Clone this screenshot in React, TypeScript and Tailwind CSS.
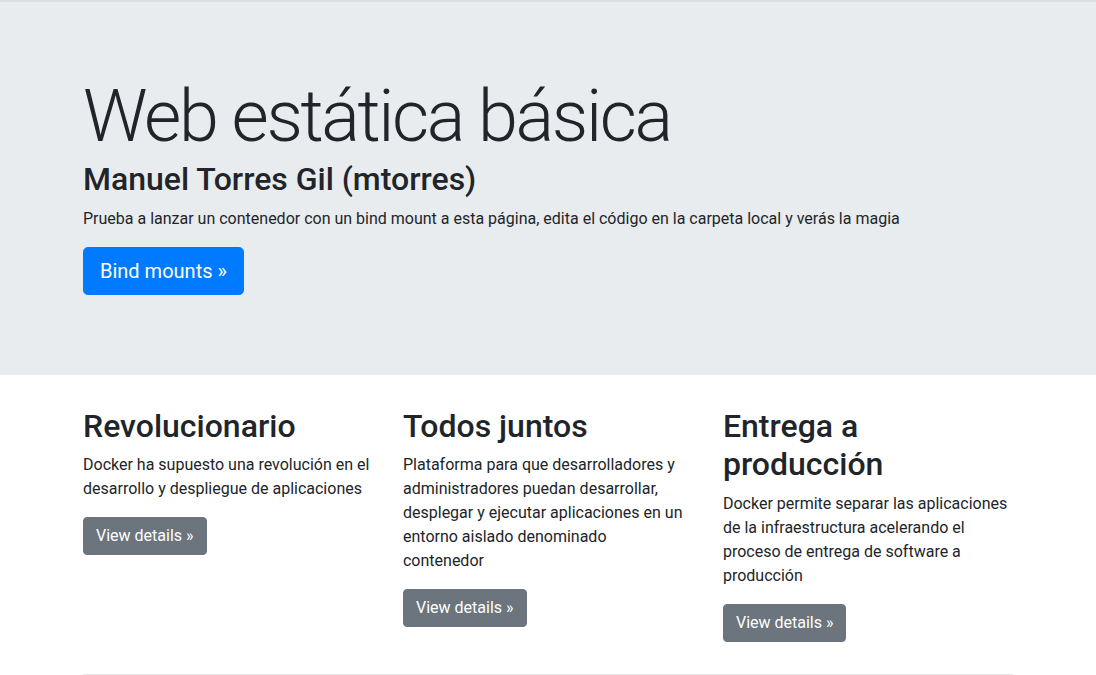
export default function App() {
  const cols = [
    {
      title: 'Revolucionario',
      text: 'Docker ha supuesto una revolución en el desarrollo y despliegue de aplicaciones',
      width: '',
    },
    {
      title: 'Todos juntos',
      text: 'Plataforma para que desarrolladores y administradores puedan desarrollar, desplegar y ejecutar aplicaciones en un entorno aislado denominado contenedor',
      width: 'max-w-[286px]',
    },
    {
      title: 'Entrega a producción',
      text: 'Docker permite separar las aplicaciones de la infraestructura acelerando el proceso de entrega de software a producción',
      width: '',
    },
  ];

  return (
    <div className="min-h-[675px] bg-white font-['Roboto',sans-serif] text-[#212529]">
      <main>
        <div className="mb-8 border-t-2 border-[#dcdfe2] bg-[#e9ecef] px-8 py-16">
          <div className="mx-auto w-[960px] px-[15px]">
            <h1 className="pt-2 text-[72px] font-light leading-[1.2] tracking-[-2.4px]">Web estática básica</h1>
            <h2 className="mb-2 text-[32px] font-medium leading-[1.2]">Manuel Torres Gil (mtorres)</h2>
            <p className="mb-4 text-base leading-6">
              Prueba a lanzar un contenedor con un bind mount a esta página, edita el código en la carpeta local y verás la magia
            </p>
            <p className="mb-4">
              <a
                href="#"
                className="inline-block rounded-[4.8px] border border-[#007bff] bg-[#007bff] px-4 py-2 text-[20px] leading-[1.5] text-white"
              >
                Bind mounts »
              </a>
            </p>
          </div>
        </div>

        <div className="mx-auto w-[960px] px-[15px]">
          <div className="-mx-[15px] flex">
            {cols.map((c) => (
              <div key={c.title} className="w-1/3 px-[15px]">
                <h2 className="mb-2 text-[32px] font-medium leading-[1.2]">{c.title}</h2>
                <p className={`mb-4 text-base leading-6 ${c.width}`}>{c.text}</p>
                <p className="mb-4">
                  <a
                    href="#"
                    className="inline-block rounded border border-[#6c757d] bg-[#6c757d] px-3 py-1.5 text-base leading-6 text-white"
                  >
                    View details »
                  </a>
                </p>
              </div>
            ))}
          </div>
          <hr className="mt-4 border-t border-black/10" />
        </div>
      </main>
    </div>
  );
}
